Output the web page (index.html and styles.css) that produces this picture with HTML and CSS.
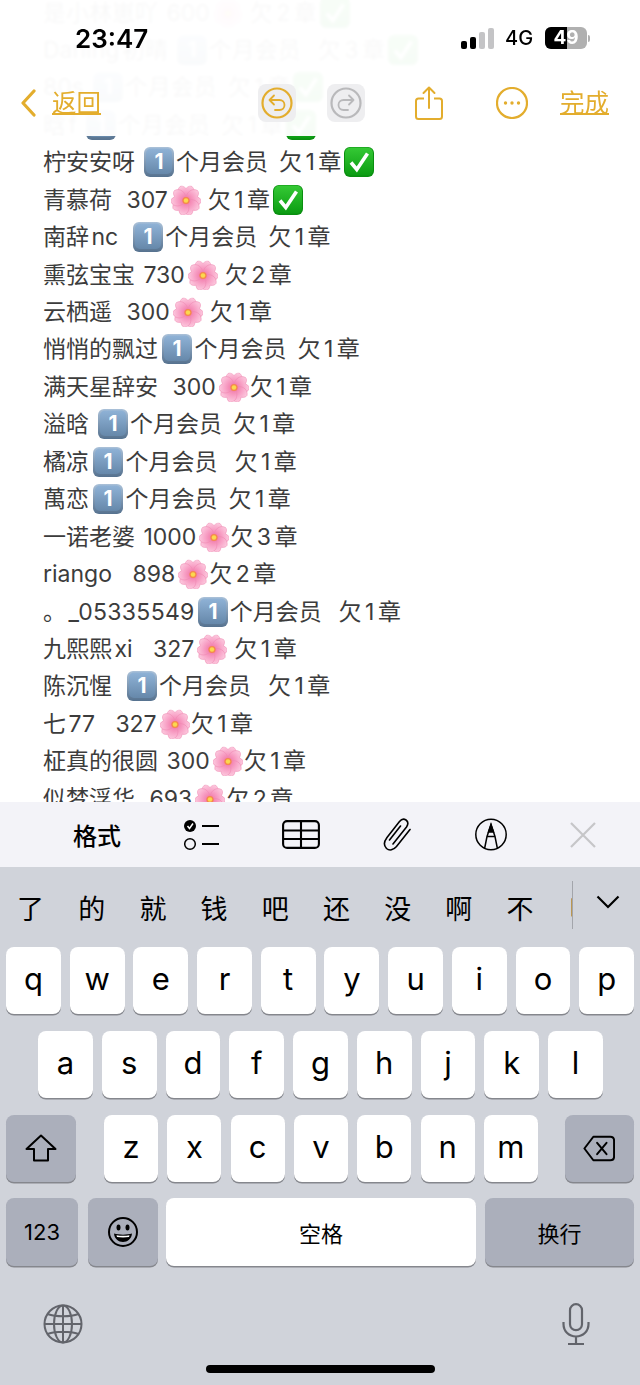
FILE: index.html
```html
<!DOCTYPE html>
<html lang="zh-CN">

<head>
  <meta charset="UTF-8">
  <title>备忘录</title>
  <link rel="stylesheet" href="styles.css">
</head>

<body>
  <svg class="defs" width="0" height="0">
    <defs>
      <linearGradient id="capOuter" x1="0" y1="0" x2="0" y2="1">
        <stop offset="0" stop-color="#a9c0d8" />
        <stop offset="1" stop-color="#56728f" />
      </linearGradient>
      <linearGradient id="capInner" x1="0" y1="0" x2="0" y2="1">
        <stop offset="0" stop-color="#8fb2d6" />
        <stop offset="1" stop-color="#6688aa" />
      </linearGradient>
      <linearGradient id="checkFill" x1="0" y1="0" x2="0" y2="1">
        <stop offset="0" stop-color="#35c935" />
        <stop offset="1" stop-color="#0b9c12" />
      </linearGradient>
      <radialGradient id="petal" gradientUnits="userSpaceOnUse" cx="15" cy="15.500" r="15">
        <stop offset="0" stop-color="#e9508d" />
        <stop offset=".3" stop-color="#f489b5" />
        <stop offset=".65" stop-color="#f9a9cb" />
        <stop offset="1" stop-color="#fcc9de" />
      </radialGradient>
      <path id="onePetal" d="M15 15.500C7 13.500 4.500 6 9 1.500C10.500 .8 12.800 1 15 3.500C17.200 1 19.500 .8 21 1.500C25.500 6 23 13.500 15 15.500Z" fill="url(#petal)" stroke="#ee86b0" stroke-width=".5" />
      <symbol id="keycap" viewBox="0 0 30 30">
        <rect width="30" height="30" rx="6" fill="url(#capOuter)" />
        <rect x="2" y="1.500" width="26" height="25.500" rx="5" fill="url(#capInner)" />
        <text x="15" y="22" text-anchor="middle" class="cap-num">1</text>
      </symbol>
      <symbol id="check" viewBox="0 0 30 30">
        <rect width="30" height="30" rx="6" fill="#0a8f10" />
        <rect x="1" y=".5" width="28" height="28" rx="5.500" fill="url(#checkFill)" />
        <path d="M7 15.500L12.800 22.500L23.500 6.500" fill="none" stroke="#fff" stroke-width="3.600" />
      </symbol>
      <symbol id="blossom" viewBox="0 0 30 30">
        <use href="#onePetal" />
        <use href="#onePetal" transform="rotate(72 15 15.500)" />
        <use href="#onePetal" transform="rotate(144 15 15.500)" />
        <use href="#onePetal" transform="rotate(216 15 15.500)" />
        <use href="#onePetal" transform="rotate(288 15 15.500)" />
        <circle cx="15" cy="15.500" r="3.600" fill="#f58a4c" />
        <circle cx="15" cy="15.500" r="2.200" fill="#fbd84e" />
      </symbol>
    </defs>
  </svg>

  <div class="phone">
    <div class="note">
      <div class="line">是小林崽吖 <span class="n">600</span><svg class="emo"><use href="#blossom" /></svg> 欠<span class="d">2</span>章<svg class="emo"><use href="#check" /></svg></div>
      <div class="line">Daning<span class="n">初晴</span> <svg class="emo"><use href="#keycap" /></svg><span class="m">个月会员</span>  欠<span class="d">3</span>章<svg class="emo"><use href="#check" /></svg></div>
      <div class="line">80s <svg class="emo"><use href="#keycap" /></svg><span class="m">个月会员</span> 欠<span class="d">1</span>章<svg class="emo"><use href="#check" /></svg></div>
      <div class="line">晗<span class="n">f</span> <svg class="emo"><use href="#keycap" /></svg><span class="m">个月会员</span> 欠<span class="d">1</span>章<svg class="emo"><use href="#check" /></svg></div>
      <div class="line">柠安安呀 <svg class="emo"><use href="#keycap" /></svg><span class="m">个月会员</span> 欠<span class="d">1</span>章<svg class="emo"><use href="#check" /></svg></div>
      <div class="line">青慕荷  <span class="n">307</span><svg class="emo"><use href="#blossom" /></svg> 欠<span class="d">1</span>章<svg class="emo"><use href="#check" /></svg></div>
      <div class="line">南辞<span class="n">nc</span>  <svg class="emo"><use href="#keycap" /></svg><span class="m">个月会员</span> 欠<span class="d">1</span>章</div>
      <div class="line">熏弦宝宝 <span class="n">730</span><svg class="emo"><use href="#blossom" /></svg> 欠<span class="d">2</span>章</div>
      <div class="line">云栖遥  <span class="n">300</span><svg class="emo"><use href="#blossom" /></svg> 欠<span class="d">1</span>章</div>
      <div class="line">悄悄的飘过 <svg class="emo tight"><use href="#keycap" /></svg><span class="m">个月会员</span> 欠<span class="d">1</span>章</div>
      <div class="line">满天星辞安  <span class="n">300</span><svg class="emo"><use href="#blossom" /></svg>欠<span class="d">1</span>章</div>
      <div class="line">溢晗 <svg class="emo"><use href="#keycap" /></svg><span class="m">个月会员</span> 欠<span class="d">1</span>章</div>
      <div class="line">橘凉 <svg class="emo tight"><use href="#keycap" /></svg><span class="m">个月会员</span>  欠<span class="d">1</span>章</div>
      <div class="line">萬恋 <svg class="emo tight"><use href="#keycap" /></svg><span class="m">个月会员</span> 欠<span class="d">1</span>章</div>
      <div class="line">一诺老婆 <span class="n">1000</span><svg class="emo"><use href="#blossom" /></svg>欠<span class="d">3</span>章</div>
      <div class="line">riango   <span class="n">898</span><svg class="emo"><use href="#blossom" /></svg>欠<span class="d">2</span>章</div>
      <div class="line">。<span class="n long">_05335549</span><svg class="emo"><use href="#keycap" /></svg><span class="m">个月会员</span>  欠<span class="d">1</span>章</div>
      <div class="line">九熙熙<span class="n">xi</span>   <span class="n">327</span><svg class="emo"><use href="#blossom" /></svg> 欠<span class="d">1</span>章</div>
      <div class="line">陈沉惺  <svg class="emo"><use href="#keycap" /></svg><span class="m">个月会员</span>  欠<span class="d">1</span>章</div>
      <div class="line">七<span class="n">77</span>   <span class="n">327</span><svg class="emo"><use href="#blossom" /></svg>欠<span class="d">1</span>章</div>
      <div class="line">柾真的很圆 <span class="n">300</span><svg class="emo"><use href="#blossom" /></svg>欠<span class="d">1</span>章</div>
      <div class="line">似梦浮华  <span class="n">693</span><svg class="emo"><use href="#blossom" /></svg>欠<span class="d">2</span>章</div>
    </div>

    <!-- frosted header sits over the scrolled note -->
    <div class="top">
      <div class="status">
        <span class="time">23:47</span>
        <div class="signal"><i class="on"></i><i class="on"></i><i></i><i></i></div>
        <span class="net">4G</span>
        <div class="battery"><span class="level"></span><span class="pct">49</span></div>
        <span class="nub"></span>
      </div>
      <div class="nav">
        <div class="back">
          <svg width="16" height="28" viewBox="0 0 16 28"><path d="M14 2L3 14L14 26" fill="none" stroke="#e3ad2d" stroke-width="3.200" stroke-linecap="round" stroke-linejoin="round" /></svg>
          <span class="link">返回</span>
        </div>
        <div class="history">
          <div class="tile">
            <svg width="32" height="32" viewBox="0 0 32 32" fill="none" stroke="#e3ad2d" stroke-width="2.200"><circle cx="16" cy="16" r="14.500" /><path d="M13 8.500L8.500 13L13 17.500M8.500 13H18.500C21.500 13 23.500 15.200 23.500 18C23.500 20.800 21.500 23 18.500 23H14" stroke-width="1.800" stroke-linecap="round" stroke-linejoin="round" /></svg>
          </div>
          <div class="tile">
            <svg width="32" height="32" viewBox="0 0 32 32" fill="none" stroke="#b9b9bb" stroke-width="2.200"><circle cx="16" cy="16" r="14.500" /><path d="M19 8.500L23.500 13L19 17.500M23.500 13H13.500C10.500 13 8.500 15.200 8.500 18C8.500 20.800 10.500 23 13.500 23H18" stroke-width="1.800" stroke-linecap="round" stroke-linejoin="round" /></svg>
          </div>
        </div>
        <svg class="share" width="28" height="34" viewBox="0 0 28 34" fill="none" stroke="#e3ad2d" stroke-width="2"><path d="M9 12.500H3.500C2 12.500 1 13.500 1 15V30.500C1 32 2 33 3.500 33H24.500C26 33 27 32 27 30.500V15C27 13.500 26 12.500 24.500 12.500H19" /><path d="M14 22V1.500M8.500 7L14 1.500L19.500 7" stroke-linecap="round" stroke-linejoin="round" /></svg>
        <svg class="more" width="32" height="32" viewBox="0 0 32 32"><circle cx="16" cy="16" r="15" fill="none" stroke="#e3ad2d" stroke-width="2.200" /><circle cx="9.500" cy="16" r="1.700" fill="#e3ad2d" /><circle cx="16" cy="16" r="1.700" fill="#e3ad2d" /><circle cx="22.500" cy="16" r="1.700" fill="#e3ad2d" /></svg>
        <span class="link done">完成</span>
      </div>
    </div>

    <div class="toolbar">
      <span class="fmt">格式</span>
      <svg width="36" height="32" viewBox="0 0 36 32"><circle cx="6" cy="7" r="6" fill="#000" /><path d="M3.500 7L5.500 9.500L9 4.500" fill="none" stroke="#fff" stroke-width="1.500" /><circle cx="6" cy="25" r="5.300" fill="none" stroke="#000" stroke-width="1.500" /><path d="M18 7H35M18 25H35" stroke="#000" stroke-width="2.200" /></svg>
      <svg width="38" height="29" viewBox="0 0 38 29" fill="none" stroke="#000" stroke-width="2.100"><rect x="1.100" y="1.100" width="35.800" height="26.800" rx="4" /><path d="M1 10.500H37M1 19H37M19 1V28" /></svg>
      <svg width="30" height="34" viewBox="0 0 30 34" fill="none" stroke="#000" stroke-width="1.600" stroke-linecap="round"><path d="M10 26L23.500 9C25.500 6 25 3.500 23 2C21 .5 18.500 1 16.500 3.500L4 19.500C1 23.500 .5 27.500 3.500 30.500C6.500 33 10.500 32 13.500 28.500L27 11.500" /><path d="M6.500 22L17.500 8" /></svg>
      <svg width="32" height="33" viewBox="0 0 32 33" fill="none" stroke="#000" stroke-width="1.500"><circle cx="16" cy="16.500" r="15.200" /><path d="M9.500 31L12 18.500L16 6.500L20 18.500L22.500 31M12 18.500H20" /><path d="M16 6.500L13.500 14L18.500 14Z" fill="#000" /></svg>
      <svg width="26" height="26" viewBox="0 0 26 26"><path d="M1 1L25 25M25 1L1 25" stroke="#c6c6c8" stroke-width="2.200" /></svg>
    </div>

    <div class="keyboard">
      <div class="cands">
        <div class="cand-list">
          <span>了</span><span>的</span><span>就</span><span>钱</span><span>吧</span><span>还</span><span>没</span><span>啊</span><span>不</span><span>吗</span>
        </div>
        <div class="cand-more">
          <svg width="24" height="14" viewBox="0 0 24 14"><path d="M1.500 1.500L12 12L22.500 1.500" fill="none" stroke="#000" stroke-width="2.200" /></svg>
        </div>
      </div>
      <div class="rows">
        <div class="row">
          <div class="key">q</div><div class="key">w</div><div class="key">e</div><div class="key">r</div><div class="key">t</div><div class="key">y</div><div class="key">u</div><div class="key">i</div><div class="key">o</div><div class="key">p</div>
        </div>
        <div class="row row-mid">
          <div class="key">a</div><div class="key">s</div><div class="key">d</div><div class="key">f</div><div class="key">g</div><div class="key">h</div><div class="key">j</div><div class="key">k</div><div class="key">l</div>
        </div>
        <div class="row row-low">
          <div class="key dark wide">
            <svg width="32" height="28" viewBox="0 0 32 28"><path d="M16 1.500L30.500 15H23V26.500H9V15H1.500Z" fill="none" stroke="#000" stroke-width="2" stroke-linejoin="round" /></svg>
          </div>
          <div class="letters">
            <div class="key">z</div><div class="key">x</div><div class="key">c</div><div class="key">v</div><div class="key">b</div><div class="key">n</div><div class="key">m</div>
          </div>
          <div class="key dark wide">
            <svg width="32" height="27" viewBox="0 0 34 28" fill="none" stroke="#000" stroke-width="2.100" stroke-linejoin="round"><path d="M11 1.500H29C31.500 1.500 33 3 33 5.500V22.500C33 25 31.500 26.500 29 26.500H11L1.500 14Z" /><path d="M15 8L25 20M25 8L15 20" stroke-linecap="round" /></svg>
          </div>
        </div>
        <div class="row row-bottom">
          <div class="key dark small num">123</div>
          <div class="key dark small emoji">
            <svg width="30" height="30" viewBox="0 0 30 30"><circle cx="15" cy="15" r="14" fill="none" stroke="#000" stroke-width="2" /><ellipse cx="10.500" cy="10.500" rx="2" ry="3" /><ellipse cx="19.500" cy="10.500" rx="2" ry="3" /><path d="M6 16.500C11 18 19 18 24 16.500C23.500 22 19.500 25 15 25C10.500 25 6.500 22 6 16.500Z" /><path d="M8.500 18.300C12.500 19 17.500 19 21.500 18.300L21 20C17.500 20.600 12.500 20.600 9 20Z" fill="#fff" /></svg>
          </div>
          <div class="key small space">空格</div>
          <div class="key dark small ret">换行</div>
        </div>
      </div>
      <div class="kb-foot">
        <svg width="40" height="40" viewBox="0 0 40 40" fill="none" stroke="#62646b" stroke-width="2"><circle cx="20" cy="20" r="18.500" /><ellipse cx="20" cy="20" rx="9" ry="18.500" /><path d="M20 1.500V38.500M1.500 20H38.500M4.500 10C13 13 27 13 35.500 10M4.500 30C13 27 27 27 35.500 30" /></svg>
        <svg width="28" height="42" viewBox="0 0 28 42" fill="none" stroke="#62646b" stroke-width="2.200"><rect x="8" y="1.200" width="12" height="26" rx="6" /><path d="M1.500 19V21C1.500 28.500 7 33.500 14 33.500C21 33.500 26.500 28.500 26.500 21V19M14 33.500V41M6 41H22" /></svg>
      </div>
      <div class="home-bar"></div>
    </div>
  </div>
</body>

</html>
```

FILE: styles.css
```css
* {
  box-sizing: border-box;
}
html,
body {
  margin: 0;
  padding: 0;
}
body {
  font-family: Inter, "Noto Sans CJK SC", sans-serif;
  background-color: #ffffff;
}
.defs {
  position: absolute;
}
.cap-num {
  font-family: Inter, sans-serif;
  font-size: 21px;
  font-weight: 700;
  fill: #ffffff;
}
.phone {
  position: relative;
  display: flex;
  flex-direction: column;
  width: 640px;
  height: 1385px;
  overflow: hidden;
}

/* note text */
.note {
  height: 802px;
  padding-left: 43px;
  overflow: hidden;
  flex-shrink: 0;
}
.line {
  height: 37.45px;
  line-height: 37.45px;
  font-size: 23px;
  color: #3c3c3c;
  white-space: pre;
  word-spacing: -0.5px;
  position: relative;
  top: -5.5px;
}
.n {
  margin-left: 2.5px;
}
.n.long {
  letter-spacing: 0.3px;
}
.m {
  margin: 0 5px 0 1px;
}
.d {
  margin: 0 3.5px;
}
.emo {
  width: 30px;
  height: 30px;
  margin: 0 1px 0 3px;
  vertical-align: -7px;
}
.emo.tight {
  margin-left: -1.5px;
}

/* header */
.top {
  position: absolute;
  top: 0;
  left: 0;
  right: 0;
  height: 136px;
  background-color: rgba(255, 255, 255, 0.965);
  backdrop-filter: blur(1.5px);
}
.status {
  display: flex;
  align-items: center;
  height: 76px;
  padding-left: 75px;
}
.time {
  width: 386px;
  font-size: 26px;
  font-weight: 600;
  color: #000000;
}
.signal {
  display: flex;
  align-items: flex-end;
  gap: 3px;
  width: 44px;
  height: 21px;
}
.signal i {
  width: 6px;
  background-color: #c4c4c6;
  border-radius: 2px;
}
.signal i:nth-child(1) {
  height: 8px;
}
.signal i:nth-child(2) {
  height: 12px;
}
.signal i:nth-child(3) {
  height: 17px;
}
.signal i:nth-child(4) {
  height: 21px;
}
.signal i.on {
  background-color: #000000;
}
.net {
  width: 40px;
  font-size: 20px;
  font-weight: 500;
  color: #000000;
}
.battery {
  position: relative;
  width: 42px;
  height: 22px;
  background-color: #b0b0b0;
  border-radius: 6px;
  overflow: hidden;
}
.level {
  display: block;
  width: 22px;
  height: 100%;
  background-color: #000000;
}
.pct {
  position: absolute;
  top: 0;
  left: 0;
  width: 100%;
  text-align: center;
  line-height: 22px;
  font-size: 19px;
  font-weight: 700;
  color: #ffffff;
}
.nub {
  width: 2px;
  height: 7px;
  margin-left: 1px;
  background-color: #b0b0b0;
  border-radius: 0 2px 2px 0;
}
.nav {
  display: flex;
  align-items: center;
  height: 54px;
  padding-left: 20px;
}
.back {
  display: flex;
  align-items: center;
  gap: 16px;
}
.link {
  font-size: 24.500px;
  line-height: 32px;
  color: #e3ad2d;
  text-decoration: underline;
  text-underline-offset: 1px;
  text-decoration-thickness: 1.500px;
}
.history {
  display: flex;
  gap: 31px;
  margin-left: 157px;
}
.tile {
  display: flex;
  align-items: center;
  justify-content: center;
  width: 38px;
  height: 38px;
  background-color: #eeeef0;
  border-radius: 8px;
}
.share {
  margin-left: 50px;
}
.more {
  margin-left: 53px;
}
.done {
  margin-left: 32px;
}

/* keyboard accessory */
.toolbar {
  display: flex;
  align-items: center;
  justify-content: space-between;
  height: 65px;
  padding: 0 44px 0 73px;
  background-color: #f3f3f8;
  flex-shrink: 0;
}
.fmt {
  font-size: 24px;
  font-weight: 500;
  color: #000000;
}

/* keyboard */
.keyboard {
  position: relative;
  flex: 1;
  background-color: #d0d3da;
}
.cands {
  display: flex;
  height: 80px;
}
.cand-list {
  display: flex;
  gap: 34.2px;
  width: 572px;
  padding-left: 17px;
  overflow: hidden;
  align-items: center;
  font-size: 27px;
  color: #000000;
  flex-shrink: 0;
}
.cand-list span {
  flex-shrink: 0;
}
.cand-list span:last-child {
  margin-left: 2px;
}
.cand-more {
  flex: 1;
  height: 48px;
  margin-top: 14px;
  border-left: 1px solid #a3a5ab;
  text-align: center;
  padding-left: 3px;
  padding-top: 12px;
}
.rows {
  display: flex;
  flex-direction: column;
  gap: 16.4px;
}
.row {
  display: flex;
  gap: 8.8px;
  height: 67.4px;
  padding: 0 6px;
}
.row-mid {
  padding: 0 37px 0 38px;
}
.row-low {
  justify-content: space-between;
}
.letters {
  display: flex;
  gap: 9.3px;
  margin-left: 2px;
}
.key {
  display: flex;
  align-items: center;
  justify-content: center;
  flex: 1;
  padding-bottom: 4px;
  background-color: #ffffff;
  border-radius: 8px;
  box-shadow: 0 1.5px 0 #85878d;
  font-size: 31px;
  color: #000000;
}
.letters .key {
  flex: none;
  width: 54px;
}
.key.dark {
  background-color: #abafbb;
}
.key.wide {
  flex: none;
  width: 69.5px;
  padding-bottom: 0;
}
.key.small {
  flex: none;
  font-size: 22px;
  padding-bottom: 0;
}
.row-bottom {
  gap: 0;
}
.num {
  width: 72px;
  margin-right: 10px;
  font-size: 23px;
}
.emoji {
  width: 70px;
  margin-right: 8px;
}
.space {
  width: 310px;
  margin-right: 9px;
}
.ret {
  width: 149px;
}
.kb-foot {
  display: flex;
  align-items: center;
  justify-content: space-between;
  padding: 0 50px 0 43px;
  margin-top: 37.500px;
}
.home-bar {
  position: absolute;
  left: 206px;
  bottom: 12px;
  width: 229px;
  height: 8px;
  background-color: #000000;
  border-radius: 4px;
}
```
